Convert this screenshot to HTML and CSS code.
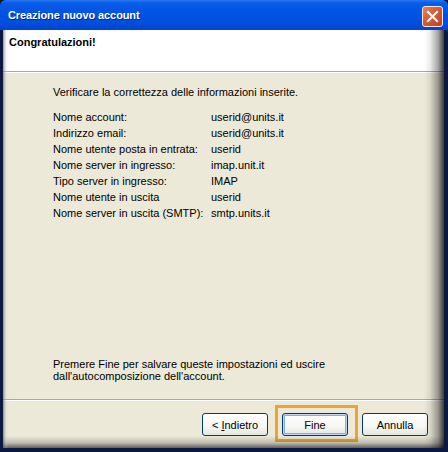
FILE: index.html
```html
<!DOCTYPE html>
<html>
<head>
<meta charset="utf-8">
<link rel="stylesheet" href="styles.css">
</head>
<body>
<div class="window">
  <div class="titlebar">
    <span class="title">Creazione nuovo account</span>
    <span class="close">
      <svg width="13" height="13" viewBox="0 0 13 13"><path d="M2 2 L11 11 M11 2 L2 11" stroke="#fff" stroke-width="2.2" stroke-linecap="square"/></svg>
    </span>
  </div>
  <div class="client">
    <div class="header">
      <span class="heading">Congratulazioni!</span>
    </div>
    <div class="content">
      <p class="intro">Verificare la correttezza delle informazioni inserite.</p>
      <div class="info">
        <span>Nome account:</span><span>userid@units.it</span>
        <span>Indirizzo email:</span><span>userid@units.it</span>
        <span>Nome utente posta in entrata:</span><span>userid</span>
        <span>Nome server in ingresso:</span><span>imap.unit.it</span>
        <span>Tipo server in ingresso:</span><span>IMAP</span>
        <span>Nome utente in uscita</span><span>userid</span>
        <span>Nome server in uscita (SMTP):</span><span>smtp.units.it</span>
      </div>
      <p class="outro">Premere Fine per salvare queste impostazioni ed uscire<br>dall'autocomposizione dell'account.</p>
    </div>
    <div class="buttons">
      <button class="btn">&lt; <u>I</u>ndietro</button>
      <span class="ring"><button class="btn default">Fine</button></span>
      <button class="btn">Annulla</button>
    </div>
    <div class="vignette"></div>
  </div>
</div>
</body>
</html>
```
FILE: styles.css
```css
html, body {
  margin: 0;
  padding: 0;
  background: #0b1433;
}
.window {
  width: 448px;
  height: 452px;
  box-sizing: border-box;
  padding: 0 4px 4px 3px;
  display: flex;
  flex-direction: column;
  background: #0c1840;
  font-family: "Liberation Sans", Arial, sans-serif;
  font-size: 11px;
  color: #000;
}
.titlebar {
  height: 30px;
  margin: 0 -4px 0 -3px;
  padding: 0 5px 0 8px;
  display: flex;
  align-items: center;
  justify-content: space-between;
  background: linear-gradient(#2a78f0 0, #0a5ce8 3px, #0054e4 40%, #004ede 80%, #0144cf 100%);
  border-radius: 6px 6px 0 0;
}
.title {
  color: #fff;
  font-family: "Liberation Sans", Arial, sans-serif;
  font-weight: bold;
  font-size: 11px;
  letter-spacing: -0.1px;
  text-shadow: 1px 1px 0 #0a2a80;
}
.close {
  width: 19px;
  height: 19px;
  margin-top: 2px;
  border: 1px solid #f2e8e0;
  border-radius: 3px;
  background: linear-gradient(135deg, #e8805e 0, #d65a36 45%, #c04024 100%);
  display: flex;
  align-items: center;
  justify-content: center;
}
.client {
  position: relative;
  flex: 1;
  display: flex;
  flex-direction: column;
  background: #ece9d8;
}
.header {
  height: 42px;
  background: #fff;
  border-bottom: 1px solid #aca899;
  box-shadow: 0 1px 0 #fff;
  padding: 6px 0 0 6px;
  box-sizing: border-box;
}
.heading {
  font-weight: bold;
  font-size: 11px;
  letter-spacing: 0;
}
.content {
  flex: 1;
  padding: 13px 0 0 50px;
  display: flex;
  flex-direction: column;
  border-bottom: 1px solid #aca899;
}
.intro {
  margin: 0 0 10px;
  line-height: 14px;
}
.info {
  display: grid;
  grid-template-columns: 158px auto;
  grid-auto-rows: 16px;
  align-items: center;
}
.outro {
  margin: auto 0 17px;
  line-height: 12px;
}
.buttons {
  height: 48px;
  box-sizing: border-box;
  border-top: 1px solid #fff;
  display: flex;
  align-items: flex-start;
  justify-content: flex-end;
  gap: 14px;
  padding: 12px 16px 0 0;
}
.btn {
  width: 66px;
  height: 23px;
  box-sizing: border-box;
  border: 1px solid #003c74;
  border-radius: 3px;
  background: linear-gradient(#ffffff 0, #f6f6f2 60%, #e6e5de 100%);
  font-family: "Liberation Sans", Arial, sans-serif;
  font-size: 11px;
  color: #000;
  padding: 0;
  display: block;
}
.btn.default {
  box-shadow: inset 0 0 0 1px #bcd4f6, inset 0 0 0 2px #89adec;
}
.ring {
  position: relative;
  display: block;
}
.ring::after {
  content: "";
  position: absolute;
  left: -7px;
  right: -10px;
  top: -8px;
  bottom: -6px;
  border: 3px solid #f0a32e;
  pointer-events: none;
}
.vignette {
  position: absolute;
  inset: 0;
  pointer-events: none;
  background:
    linear-gradient(to right, rgba(90,90,120,0.6) 0, rgba(200,200,210,0.2) 3px, rgba(255,255,255,0) 6px),
    linear-gradient(to left, rgba(0,0,0,0.75) 0, rgba(0,0,0,0.35) 6px, rgba(0,0,0,0.08) 14px, rgba(0,0,0,0) 20px),
    linear-gradient(to top, rgba(0,0,0,0.6) 0, rgba(0,0,0,0.2) 5px, rgba(0,0,0,0) 12px);
}
```
